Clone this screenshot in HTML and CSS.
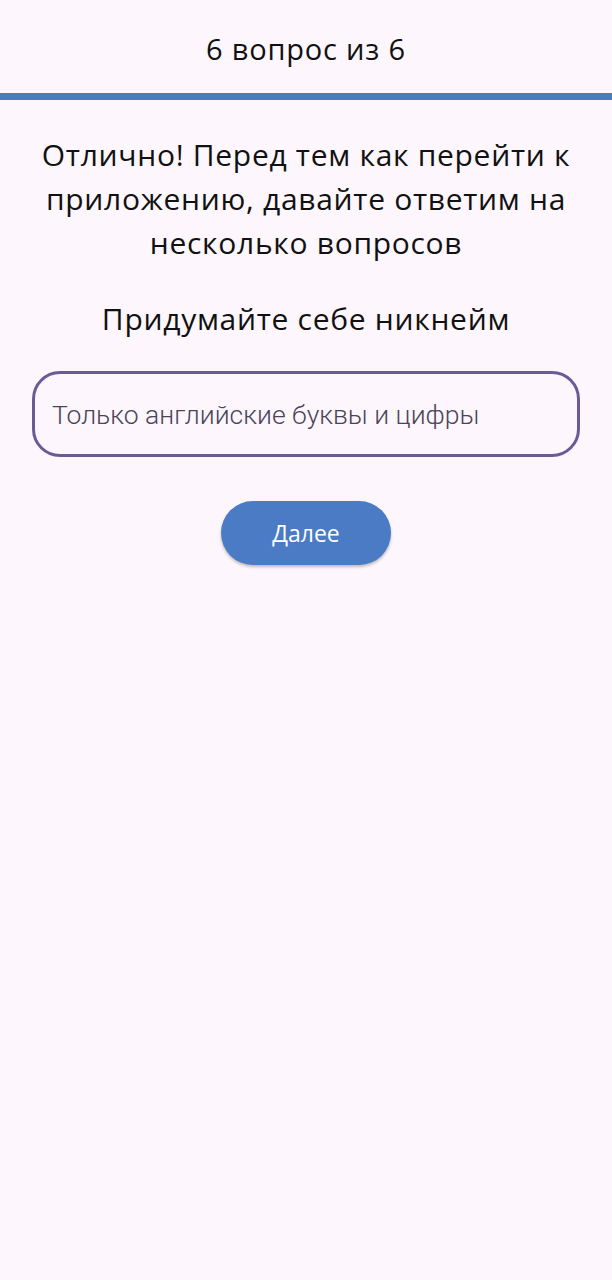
FILE: index.html
```html
<!DOCTYPE html>
<html lang="ru">
<head>
<meta charset="utf-8">
<link rel="stylesheet" href="styles.css">
</head>
<body>
<header class="top">
  <div class="counter">6 вопрос из 6</div>
</header>
<div class="progress"></div>
<main class="content">
  <h1 class="title">Отлично! Перед тем как перейти к приложению, давайте ответим на несколько вопросов</h1>
  <h2 class="question">Придумайте себе никнейм</h2>
  <div class="field">
    <input class="input" type="text" placeholder="Только английские буквы и цифры">
  </div>
  <div class="actions">
    <button class="btn">Далее</button>
  </div>
</main>
</body>
</html>
```
FILE: styles.css
```css
html, body {
  margin: 0;
  padding: 0;
  background: #fdf7fd;
}
body {
  font-family: "Open Sans", "Noto Sans", sans-serif;
  color: #111;
  min-height: 1280px;
}
.top {
  height: 93px;
  display: flex;
  align-items: center;
  justify-content: center;
}
.counter {
  font-size: 29px;
  line-height: 34px;
  margin-top: 4px;
  letter-spacing: 0.8px;
}
.progress {
  height: 7px;
  background: #4a7dbf;
}
.content {
  padding: 0 16px;
  display: flex;
  flex-direction: column;
  align-items: stretch;
}
.title {
  margin: 33px 0 0;
  font-weight: 400;
  font-size: 30px;
  line-height: 44px;
  text-align: center;
  letter-spacing: 0.7px;
}
.question {
  margin: 34px 0 0;
  font-weight: 400;
  font-size: 30px;
  line-height: 40px;
  text-align: center;
  letter-spacing: 0.7px;
}
.field {
  margin: 32px 16px 0;
}
.input {
  box-sizing: border-box;
  width: 100%;
  height: 86px;
  border: 3px solid #6a5a96;
  border-radius: 28px;
  background: transparent;
  padding: 0 17px;
  font-family: Roboto, sans-serif;
  font-weight: 300;
  font-size: 26.5px;
  color: #222;
  outline: none;
}
.input::placeholder {
  color: #4a4458;
  opacity: 1;
}
.actions {
  display: flex;
  justify-content: center;
  margin-top: 44px;
}
.btn {
  width: 170px;
  height: 64px;
  border: none;
  border-radius: 32px;
  background: #4a7bc4;
  color: #fff;
  font-family: "Open Sans", "Noto Sans", sans-serif;
  font-size: 23px;
  box-shadow: 0 2px 3px rgba(0,0,0,0.25);
}
```
